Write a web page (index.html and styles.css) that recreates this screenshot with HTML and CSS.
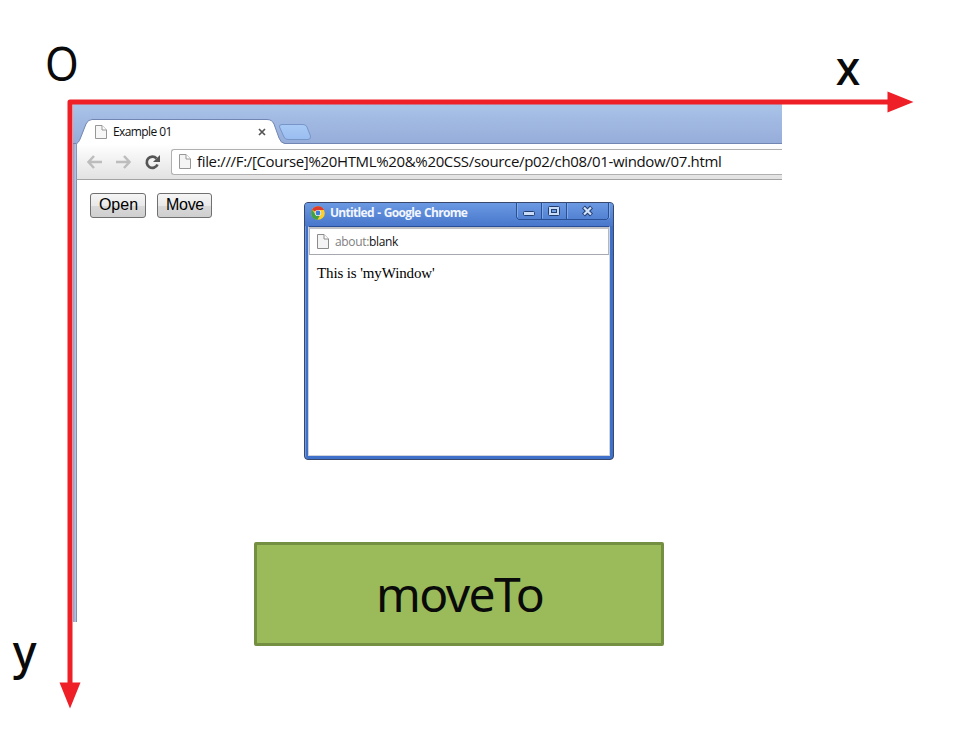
FILE: index.html
```
<!DOCTYPE html>
<html lang="en">
<head>
<meta charset="utf-8">
<title>moveTo</title>
<link rel="stylesheet" href="styles.css">
</head>
<body>
<main class="diagram">
  <section class="browser">
    <div class="tabstrip">
      <svg class="tab-shape" width="240" height="40" viewBox="73 104 240 40">
        <defs>
          <linearGradient id="newtab" x1="0" y1="0" x2="0" y2="1"><stop offset="0" stop-color="#a8caf6"/><stop offset="1" stop-color="#9abdf0"/></linearGradient>
        </defs>
        <path d="M75 147Q76 143.500 78 142.500Q79.500 141 80.500 138L86 124Q88 119.500 92 119.500H267Q272 119.500 274 124L279 138Q281 143.500 285 143.500V147Z" fill="#fff" stroke="#7186b2"/>
        <path d="M282 124.500H303Q306 124.500 307 127L310.500 136Q311 139.500 308 139.500H288Q285 139.500 284 137L279.500 127Q279 124.500 282 124.500Z" fill="url(#newtab)" stroke="#7895c8"/>
      </svg>
      <div class="tab">
        <svg class="page" width="12" height="14" viewBox="0 0 12 14"><path d="M.5.500H7L11.500 5V13.500H.5Z" fill="#f7f7f7" stroke="#979797"/><path d="M7 .5V5H11.500" fill="#fff" stroke="#979797"/></svg>
        <span class="tab-title">Example 01</span>
        <svg class="close" width="8" height="8" viewBox="0 0 8 8"><path d="M1 1L7 7M7 1L1 7" stroke="#555" stroke-width="1.700"/></svg>
      </div>
    </div>
    <div class="toolbar">
      <svg class="nav" width="76" height="20" viewBox="85 151 76 20" fill="none">
        <path d="M102 161H89M94 155L88.500 161L94 167" stroke="#bdbdbd" stroke-width="2.500"/>
        <path d="M116 161H129M124 155L129.500 161L124 167" stroke="#bdbdbd" stroke-width="2.500"/>
        <path d="M156.500 157.500A5.600 5.600 0 1 0 157.500 163.500" stroke="#555" stroke-width="2.700"/>
        <path d="M160 154V161H153Z" fill="#555"/>
      </svg>
      <div class="address">
        <svg class="page" width="12" height="15" viewBox="0 0 12 15"><path d="M.5.500H7L11.500 5V14.500H.5Z" fill="#f4f4f4" stroke="#979797"/><path d="M7 .5V5H11.500" fill="#fff" stroke="#979797"/></svg>
        <span class="url">file:///F:/[Course]%20HTML%20&amp;%20CSS/source/p02/ch08/01-window/07.html</span>
      </div>
    </div>
    <div class="content">
      <button class="btn open">Open</button>
      <button class="btn move">Move</button>
    </div>
  </section>

  <section class="popup">
    <header class="popup-bar">
      <svg class="chrome" width="14" height="14" viewBox="0 0 14 14">
        <circle cx="7" cy="7" r="6.800" fill="#fbcf2c"/>
        <path d="M7 7L1 3.700A6.900 6.900 0 0 1 13.200 4H7Z" fill="#df3a2c"/>
        <path d="M1 3.600A6.900 6.900 0 0 0 6.300 13.900L9.500 8.500L4.400 8.500Z" fill="#42a046"/>
        <circle cx="7" cy="7" r="3.100" fill="#f5f7fb"/><circle cx="7" cy="7" r="2.400" fill="#3c7ddb"/>
      </svg>
      <span class="popup-title">Untitled - Google Chrome</span>
      <svg class="controls" width="94" height="18" viewBox="516 202 94 18" fill="none">
        <path d="M516.500 202V217.500L518.500 219.500H606.500L608.500 217.500V202M541.500 202V219M566.500 202V219" stroke="#294f94"/>
        <path d="M517.500 203V217M542.500 203V218.500M567.500 203V218.500M609.500 203V218" stroke="#84aae6"/>
        <rect x="523.500" y="211.500" width="11" height="4" rx="1" fill="#c8dcf8" stroke="#233e70"/>
        <rect x="548.500" y="206.500" width="11" height="9" rx="1" fill="#c8dcf8" stroke="#233e70"/>
        <rect x="551.500" y="209.500" width="5" height="3" fill="#6f9de2" stroke="#233e70"/>
        <path d="M583.500 207L591.500 215M591.500 207L583.500 215" stroke="#233e70" stroke-width="4.200"/>
        <path d="M584 207.500L591 214.500M591 207.500L584 214.500" stroke="#d2e3fc" stroke-width="2.200"/>
      </svg>
    </header>
    <div class="popup-view">
      <div class="popup-address">
        <svg class="page" width="12" height="15" viewBox="0 0 12 15"><path d="M.5.500H7L11.500 5V14.500H.5Z" fill="#f4f4f4" stroke="#8c8c8c"/><path d="M7 .5V5H11.500" fill="#fff" stroke="#8c8c8c"/></svg>
        <span class="about"><span class="scheme">about:</span>blank</span>
      </div>
      <p class="message">This is 'myWindow'</p>
    </div>
  </section>

  <svg class="axes" width="958" height="740" viewBox="0 0 958 740">
    <path d="M888 102H70V683" fill="none" stroke="#ee1f27" stroke-width="5" stroke-linejoin="round"/>
    <path d="M887.500 91.500L913.500 102L887.500 112.500ZM59.500 682.500H80.500L70 708.500Z" fill="#ee1f27"/>
  </svg>
  <span class="label origin">O</span>
  <span class="label axis-x">x</span>
  <span class="label axis-y">y</span>
  <div class="caption"><span class="caption-text">moveTo</span></div>
</main>
</body>
</html>
```
FILE: styles.css
```
* { box-sizing: border-box; }
body { margin: 0; background: #fff; }
.diagram { position: relative; width: 958px; height: 740px; overflow: hidden; color: #0a0a0a; font-family: "Open Sans", "Noto Sans", sans-serif; }
svg { display: block; flex: none; }

.browser { position: absolute; left: 73px; top: 104px; width: 709px; height: 518px; display: flex; flex-direction: column; }
.tabstrip { position: relative; height: 40px; padding-top: 15px; background: linear-gradient(#a9c3e8, #96adda); border-bottom: 1px solid #7186b2; }
.tab-shape { position: absolute; left: 0; top: 0; }
.tab { position: relative; display: flex; align-items: center; width: 171px; height: 25px; margin-left: 22px; }
.tab-title { margin-left: 6px; flex: 1; font-size: 12px; letter-spacing: -.6px; color: #111; white-space: nowrap; }
.toolbar { display: flex; align-items: center; height: 36px; padding-left: 8px; margin-left: 3px; background: linear-gradient(#fff, #e2e2e2); border-bottom: 1px solid #a3a3a3; border-left: 1px solid #8795b6; }
.address { display: flex; align-items: center; flex: 1; height: 26px; margin-left: 10px; padding-left: 7px; background: #fff; border: 1px solid #b0b0b0; border-right: 0; border-radius: 3px 0 0 3px; }
.url { margin-left: 6px; padding-bottom: 2px; font-size: 15px; line-height: 20px; letter-spacing: -.34px; white-space: nowrap; color: #111; }
.content { display: flex; align-items: flex-start; gap: 11px; flex: 1; padding: 13px 0 0 13px; margin-left: 3px; border-left: 1px solid #8491ad; }
.browser::before { content: ""; position: absolute; left: 0; top: 40px; bottom: 0; width: 3px; background: linear-gradient(90deg, #8f9ec2, #b4c9ec); }
.btn { height: 25px; padding: 0 0 1px; border: 1px solid #707070; border-radius: 3px; background: linear-gradient(#f5f5f5, #e9e9e9 50%, #d9d9d9 51%, #cfcfcf); font: 16px/20px "Liberation Sans", sans-serif; color: #000; }
.open { width: 56px; padding-left: 1px; }
.move { width: 55px; padding-left: 1px; letter-spacing: -.3px; }

.popup { position: absolute; left: 304px; top: 202px; width: 310px; height: 258px; padding: 0 3px 3px; display: flex; flex-direction: column; background: #3f70ca; border: 1px solid #38476a; border-radius: 4px; box-shadow: inset 1px 0 #7299dc; }
.popup-bar { display: flex; align-items: center; height: 23px; margin: 0 -3px; padding-left: 6px; flex: none; background: linear-gradient(#6b99e2, #4877cc); border-radius: 3px 3px 0 0; }
.popup-title { flex: 1; margin-left: 5px; margin-top: -3px; font: bold 12px/16px "Open Sans", sans-serif; letter-spacing: -.7px; word-spacing: 1px; color: #f2f6ff; white-space: nowrap; }
.chrome { margin-top: -3px; }
.controls { align-self: flex-start; margin: -1px 3px 0 0; }
.popup-view { flex: 1; background: #fff; border: 1px solid #294e96; border-left-color: #d0d4dc; border-right-color: #d0d4dc; border-bottom-color: #d0d4dc; }
.popup-address { display: flex; align-items: center; height: 28px; padding-left: 7px; border: 1px solid #aeb8ca; border-top: 2px solid #bfc1c6; border-bottom-color: #a5a8ae; }
.popup-address .page { margin-top: -1px; }
.about { margin: -1px 0 0 6px; font-size: 12px; letter-spacing: -.34px; color: #111; }
.scheme { color: #808080; }
.message { margin: 9px 0 0 8px; font: 15px/18px "Liberation Serif", serif; letter-spacing: -.12px; color: #000; }

.axes { position: absolute; left: 0; top: 0; }
.label { position: absolute; font: 48px/56px "Noto Sans", sans-serif; }
.origin { left: 43px; top: 35px; transform: scaleX(.9); }
.axis-x { left: 835px; top: 39px; font-weight: 500; transform: scaleX(.94); }
.axis-y { left: 12px; top: 623px; font-weight: 500; transform: scaleX(.94); }
.caption { position: absolute; left: 254px; top: 542px; width: 410px; height: 104px; display: flex; align-items: center; justify-content: center; background: #9bbb5b; border: 3px solid #748f41; border-radius: 2px; }
.caption-text { margin-left: 1px; font: 48px/56px "Noto Sans", sans-serif; letter-spacing: -1.6px; }
```
